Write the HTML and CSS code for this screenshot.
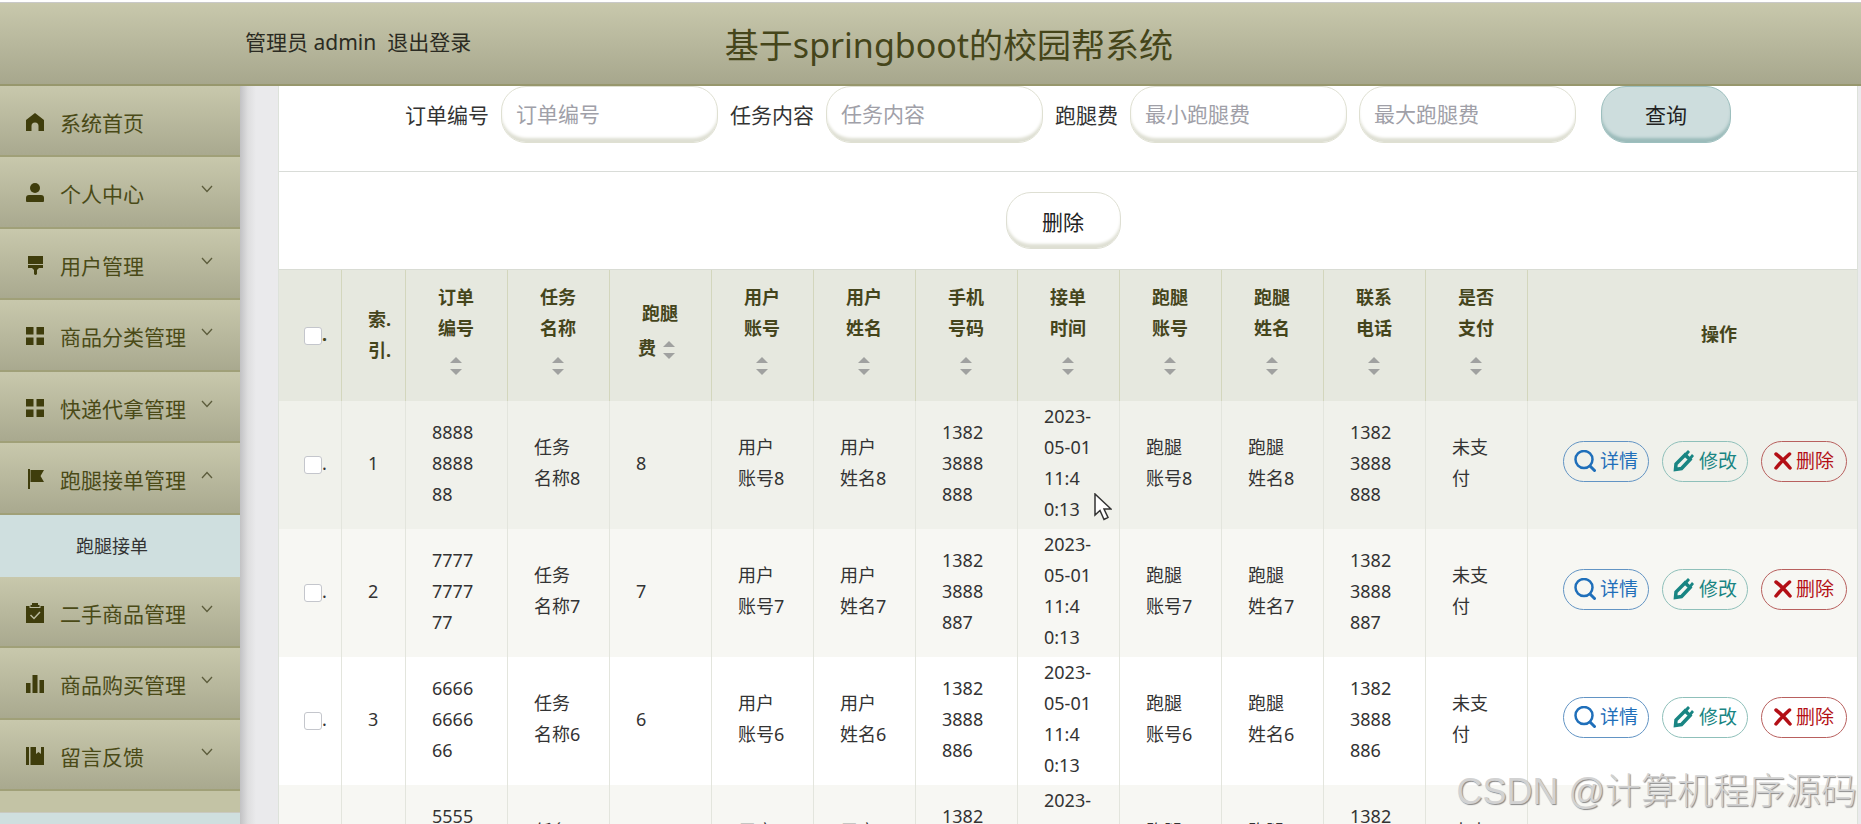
FILE: index.html
```html
<!DOCTYPE html>
<html lang="zh-CN">
<head>
    <meta charset="UTF-8">
    <meta name="viewport" content="width=device-width, initial-scale=1.0">
    <title>基于springboot的校园帮系统</title>
    <link rel="stylesheet" href="styles.css">
</head>
<body>
    <!-- shared icons -->
    <svg class="sprite" aria-hidden="true">
        <symbol id="i-home" viewBox="0 0 18 18"><path d="M9 0L0 7v11h5.500v-5a3.500 3.500 0 0 1 7 0v5H18V7z"/></symbol>
        <symbol id="i-user" viewBox="0 0 18 20"><circle cx="9" cy="5" r="5"/><path d="M3 12h12q3 0 3 3v3q0 1-1 1H1q-1 0-1-1v-3q0-3 3-3z"/></symbol>
        <symbol id="i-brush" viewBox="0 0 18 20"><path d="M2 1h15v8H2zM2 10h15v3h-4l-2 2v4q-1.500 2-3 0v-4l-2-2H2z"/></symbol>
        <symbol id="i-menu" viewBox="0 0 18 18"><path d="M0 0h7.500v7.500H0zM10.500 0H18v7.500h-7.500zM0 10.500h7.500V18H0zM10.500 10.500H18V18h-7.500z"/></symbol>
        <symbol id="i-flag" viewBox="0 0 18 20"><path d="M2 0h2v20H2zM4.500 1H18l-3.500 6L18 13H4.500z"/></symbol>
        <symbol id="i-claim" viewBox="0 0 18 20"><path d="M0 3h3.500v2h11V3H18v17H0z"/><path d="M6 2V0h6v2h1.500v2h-9V2z"/><path d="M4.500 12l3.500 3.500 6-6.500" fill="none" stroke="#b9b99c" stroke-width="1.500"/></symbol>
        <symbol id="i-data" viewBox="0 0 18 18"><path d="M0 8h4.500v10H0zM6.500 0h5v18h-5zM13.500 5H18v13h-4.500z"/></symbol>
        <symbol id="i-book" viewBox="0 0 18 18"><path d="M0 0h3v18H0zM4.500 0H10v7l2.500-2L15 7V0h3v18H4.500z"/></symbol>
        <symbol id="i-down" viewBox="0 0 12 8"><path d="M1 1l5 5.500L11 1" fill="none" stroke="currentColor" stroke-width="1.300"/></symbol>
        <symbol id="i-up" viewBox="0 0 12 8"><path d="M1 7l5-5.500L11 7" fill="none" stroke="currentColor" stroke-width="1.300"/></symbol>
        <symbol id="i-search" viewBox="0 0 22 22"><circle cx="10" cy="9.500" r="8.500" fill="none" stroke="currentColor" stroke-width="2.500"/><path d="M16 16l4.500 4.500" stroke="currentColor" stroke-width="3" stroke-linecap="round"/></symbol>
        <symbol id="i-edit" viewBox="0 0 22 22"><path d="M2.500 19.500l.5-5.500L12 5l5 4.500L8.500 18.500z" fill="none" stroke="currentColor" stroke-width="3.500"/><path d="M11 4l4-4 2 2-2.500 3 2 2L19 4l2 2-4 5z"/></symbol>
        <symbol id="i-close" viewBox="0 0 18 18"><path d="M2 2c4 3 9 8 14 14M15.500 2C11 6 6 11 2 16" fill="none" stroke="currentColor" stroke-width="3.500" stroke-linecap="round"/></symbol>
    </svg>

    <header class="header">
        <div class="user"><span>管理员 admin</span><a href="#">退出登录</a></div>
        <h1>基于springboot的校园帮系统</h1>
    </header>

    <div class="layout">
        <nav class="sidebar">
            <ul class="menu">
                <li><a href="#"><svg class="icon"><use href="#i-home"/></svg>系统首页</a></li>
                <li><a href="#"><svg class="icon"><use href="#i-user"/></svg>个人中心<svg class="arrow"><use href="#i-down"/></svg></a></li>
                <li><a href="#"><svg class="icon"><use href="#i-brush"/></svg>用户管理<svg class="arrow"><use href="#i-down"/></svg></a></li>
                <li><a href="#"><svg class="icon"><use href="#i-menu"/></svg>商品分类管理<svg class="arrow"><use href="#i-down"/></svg></a></li>
                <li><a href="#"><svg class="icon"><use href="#i-menu"/></svg>快递代拿管理<svg class="arrow"><use href="#i-down"/></svg></a></li>
                <li>
                    <a href="#"><svg class="icon"><use href="#i-flag"/></svg>跑腿接单管理<svg class="arrow"><use href="#i-up"/></svg></a>
                    <a class="sub" href="#">跑腿接单</a>
                </li>
                <li><a href="#"><svg class="icon"><use href="#i-claim"/></svg>二手商品管理<svg class="arrow"><use href="#i-down"/></svg></a></li>
                <li><a href="#"><svg class="icon"><use href="#i-data"/></svg>商品购买管理<svg class="arrow"><use href="#i-down"/></svg></a></li>
                <li><a href="#"><svg class="icon"><use href="#i-book"/></svg>留言反馈<svg class="arrow"><use href="#i-down"/></svg></a></li>
            </ul>
            <div class="menu-end"></div>
        </nav>

        <main class="main">
            <div class="panel">
                <form class="search">
                    <label for="orderNo">订单编号</label>
                    <input type="text" id="orderNo" placeholder="订单编号">
                    <label for="task">任务内容</label>
                    <input type="text" id="task" placeholder="任务内容">
                    <label for="feeMin">跑腿费</label>
                    <input type="text" id="feeMin" placeholder="最小跑腿费">
                    <input type="text" id="feeMax" placeholder="最大跑腿费" aria-label="最大跑腿费">
                    <button type="button" class="btn btn-query">查询</button>
                </form>

                <div class="toolbar">
                    <button type="button" class="btn">删除</button>
                </div>

                <table class="orders">
                    <colgroup>
                        <col class="c-check"><col class="c-index">
                        <col span="11" class="c-data">
                        <col>
                    </colgroup>
                    <thead>
                        <tr>
                            <th class="check"><input type="checkbox" aria-label="全选">.</th>
                            <th class="index">索.<br>引.</th>
                            <th>订单<br>编号<br><span class="sort"></span></th>
                            <th>任务<br>名称<br><span class="sort"></span></th>
                            <th>跑腿<br>费<span class="sort"></span></th>
                            <th>用户<br>账号<br><span class="sort"></span></th>
                            <th>用户<br>姓名<br><span class="sort"></span></th>
                            <th>手机<br>号码<br><span class="sort"></span></th>
                            <th>接单<br>时间<br><span class="sort"></span></th>
                            <th>跑腿<br>账号<br><span class="sort"></span></th>
                            <th>跑腿<br>姓名<br><span class="sort"></span></th>
                            <th>联系<br>电话<br><span class="sort"></span></th>
                            <th>是否<br>支付<br><span class="sort"></span></th>
                            <th class="ops">操作</th>
                        </tr>
                    </thead>
                    <tbody>
                        <tr class="hover">
                            <td class="check"><input type="checkbox" aria-label="选择第1行">.</td>
                            <td>1</td>
                            <td>8888<br>8888<br>88</td>
                            <td>任务<br>名称8</td>
                            <td>8</td>
                            <td>用户<br>账号8</td>
                            <td>用户<br>姓名8</td>
                            <td>1382<br>3888<br>888</td>
                            <td>2023-<br>05-01<br>11:4<br>0:13</td>
                            <td>跑腿<br>账号8</td>
                            <td>跑腿<br>姓名8</td>
                            <td>1382<br>3888<br>888</td>
                            <td>未支<br>付</td>
                            <td class="ops">
                                <div class="actions">
                                    <button type="button" class="act view"><svg><use href="#i-search"/></svg>详情</button>
                                    <button type="button" class="act edit"><svg><use href="#i-edit"/></svg>修改</button>
                                    <button type="button" class="act del"><svg><use href="#i-close"/></svg>删除</button>
                                </div>
                            </td>
                        </tr>
                        <tr>
                            <td class="check"><input type="checkbox" aria-label="选择第2行">.</td>
                            <td>2</td>
                            <td>7777<br>7777<br>77</td>
                            <td>任务<br>名称7</td>
                            <td>7</td>
                            <td>用户<br>账号7</td>
                            <td>用户<br>姓名7</td>
                            <td>1382<br>3888<br>887</td>
                            <td>2023-<br>05-01<br>11:4<br>0:13</td>
                            <td>跑腿<br>账号7</td>
                            <td>跑腿<br>姓名7</td>
                            <td>1382<br>3888<br>887</td>
                            <td>未支<br>付</td>
                            <td class="ops">
                                <div class="actions">
                                    <button type="button" class="act view"><svg><use href="#i-search"/></svg>详情</button>
                                    <button type="button" class="act edit"><svg><use href="#i-edit"/></svg>修改</button>
                                    <button type="button" class="act del"><svg><use href="#i-close"/></svg>删除</button>
                                </div>
                            </td>
                        </tr>
                        <tr>
                            <td class="check"><input type="checkbox" aria-label="选择第3行">.</td>
                            <td>3</td>
                            <td>6666<br>6666<br>66</td>
                            <td>任务<br>名称6</td>
                            <td>6</td>
                            <td>用户<br>账号6</td>
                            <td>用户<br>姓名6</td>
                            <td>1382<br>3888<br>886</td>
                            <td>2023-<br>05-01<br>11:4<br>0:13</td>
                            <td>跑腿<br>账号6</td>
                            <td>跑腿<br>姓名6</td>
                            <td>1382<br>3888<br>886</td>
                            <td>未支<br>付</td>
                            <td class="ops">
                                <div class="actions">
                                    <button type="button" class="act view"><svg><use href="#i-search"/></svg>详情</button>
                                    <button type="button" class="act edit"><svg><use href="#i-edit"/></svg>修改</button>
                                    <button type="button" class="act del"><svg><use href="#i-close"/></svg>删除</button>
                                </div>
                            </td>
                        </tr>
                        <tr>
                            <td class="check"><input type="checkbox" aria-label="选择第4行">.</td>
                            <td>4</td>
                            <td>5555<br>5555<br>55</td>
                            <td>任务<br>名称5</td>
                            <td>5</td>
                            <td>用户<br>账号5</td>
                            <td>用户<br>姓名5</td>
                            <td>1382<br>3888<br>885</td>
                            <td>2023-<br>05-01<br>11:4<br>0:13</td>
                            <td>跑腿<br>账号5</td>
                            <td>跑腿<br>姓名5</td>
                            <td>1382<br>3888<br>885</td>
                            <td>未支<br>付</td>
                            <td class="ops">
                                <div class="actions">
                                    <button type="button" class="act view"><svg><use href="#i-search"/></svg>详情</button>
                                    <button type="button" class="act edit"><svg><use href="#i-edit"/></svg>修改</button>
                                    <button type="button" class="act del"><svg><use href="#i-close"/></svg>删除</button>
                                </div>
                            </td>
                        </tr>
                    </tbody>
                </table>
            </div>
        </main>
    </div>

    <svg class="cursor" viewBox="0 0 18 28"><path d="M1 1v21l5-4.500 4 9 4-2-4-8.500h7z" fill="#fff" stroke="#333" stroke-width="1.500"/></svg>
    <div class="watermark">CSDN @计算机程序源码</div>
</body>
</html>
```

FILE: styles.css
```css
* {
    box-sizing: border-box;
}
body {
    margin: 0;
    height: 100vh;
    overflow: hidden;
    display: flex;
    flex-direction: column;
    font-family: "Noto Sans", "Noto Sans CJK SC", sans-serif;
    font-size: 21px;
    color: #333;
    background: #fff;
}
a {
    color: inherit;
    text-decoration: none;
}
button,
input {
    font-family: inherit;
    font-size: inherit;
}
.sprite {
    display: none;
}

/* header */
.header {
    flex: none;
    display: grid;
    grid-template-columns: 1fr auto 1fr;
    height: 84px;
    margin-top: 2px;
    padding-left: 37px;
    border-top: 1px solid #c9c9c9;
    border-bottom: 2px solid #97976d;
    background: linear-gradient(#c8c8ac, #a7a78d);
}
.user {
    display: flex;
    gap: 11px;
    padding: 22px 0 0 208px;
    line-height: 34px;
    color: #2b2b22;
}
.header h1 {
    margin: 0;
    padding-top: 2px;
    font-size: 34px;
    font-weight: normal;
    line-height: 80px;
    color: #45451a;
}

.layout {
    flex: 1;
    min-height: 0;
    display: flex;
}

/* sidebar */
.sidebar {
    flex: none;
    width: 240px;
    overflow: hidden;
    background: #cfdfdf;
}
.menu {
    list-style: none;
    margin: 0;
    padding: 0;
}
.menu a {
    display: flex;
    align-items: center;
    height: 71px;
    padding: 2px 27px 0 26px;
    border-bottom: 2px solid #a0a078;
    background: linear-gradient(#c8c8ac, #a9a98f);
    color: #4a4a17;
}
.menu li:nth-child(even) > a {
    height: 72px;
}
.menu li > a.sub {
    height: 62px;
    padding: 0 16px 2px 0;
    justify-content: center;
    border: 0;
    background: #cfdfdf;
    font-size: 18px;
    color: #333;
}
.icon {
    width: 18px;
    height: 20px;
    margin-right: 16px;
    fill: #3f3d0c;
}
.arrow {
    width: 12px;
    height: 8px;
    margin: 0 0 8px auto;
    color: #5c5c3c;
}
.menu-end {
    height: 22px;
    background: #c3c3a5;
    border-bottom: 1px solid #c9c9c0;
}

/* content */
.main {
    flex: 1;
    min-width: 0;
    padding: 0 3px 0 38px;
    background: linear-gradient(90deg, #c2c2c4, #dededf 8px, #eaeaec 16px);
}
.panel {
    border: 1px solid #dde2da;
    border-top: 0;
    background: #fff;
}
.search {
    display: flex;
    justify-content: center;
    align-items: center;
    gap: 12px;
    height: 86px;
    padding-bottom: 29px;
    border-bottom: 1px solid #d9dcd8;
}
.search input {
    width: 217px;
    height: 57px;
    padding: 0 14px;
    border: 1px solid #dfe0d2;
    border-radius: 25px;
    background: #fff;
    box-shadow: inset 0 -5px 3px -1px #dedfd3;
    outline: none;
}
.search input::placeholder {
    color: #a0a0a8;
}
.btn {
    width: 115px;
    height: 57px;
    padding: 0;
    border: 1px solid #dedfd3;
    border-radius: 25px;
    background: #fff;
    box-shadow: inset 0 -5px 3px -1px #dedfd3;
    color: #222;
    cursor: pointer;
}
.btn-query {
    width: 130px;
    margin-left: 13px;
    border-color: #9dbfbe;
    background: #cddddd;
    box-shadow: inset 0 -5px 3px -1px #9bbbba;
}
.toolbar {
    display: flex;
    justify-content: center;
    padding: 20px 10px 20px 0;
}

/* table */
.orders {
    width: 100%;
    table-layout: fixed;
    border-collapse: separate;
    border-spacing: 0;
    border-top: 1px solid #d9dcd4;
    font-size: 18px;
    line-height: 31px;
}
.c-check {
    width: 63px;
}
.c-index {
    width: 64px;
}
.c-data {
    width: 102px;
}
.orders th {
    height: 131px;
    padding: 0 1px 2px 0;
    border-right: 1px solid #d3d6bd;
    background: #e6e8df;
    color: #45451c;
}
.orders td {
    height: 128px;
    padding: 0 0 4px 26px;
    border-right: 1px solid #e3e5dd;
}
.orders th.index {
    padding-left: 26px;
    text-align: left;
}
.orders th.ops {
    padding-left: 54px;
    border-right: 0;
}
.orders td.ops {
    padding: 0 10px 0 0;
    border-right: 0;
}
.orders .check {
    padding-left: 25px;
    text-align: left;
    white-space: nowrap;
}
.orders tbody tr:nth-child(even) {
    background: #f7f7f3;
}
.orders tbody tr.hover {
    background: #f0f1eb;
}
.orders input {
    appearance: none;
    width: 18px;
    height: 18px;
    margin: 0;
    border: 1px solid #c4c6cc;
    border-radius: 3px;
    background: #fff;
    vertical-align: middle;
}
.sort {
    display: inline-flex;
    flex-direction: column;
    align-items: center;
    justify-content: center;
    gap: 6px;
    width: 26px;
    height: 43px;
    vertical-align: middle;
}
.sort::before,
.sort::after {
    content: "";
    border: 6px solid transparent;
}
.sort::before {
    border-top: 0;
    border-bottom-color: #a0a1a0;
}
.sort::after {
    border-bottom: 0;
    border-top-color: #a0a1a0;
}
.actions {
    display: flex;
    justify-content: flex-end;
    gap: 13px;
    padding-bottom: 8px;
}
.act {
    display: flex;
    align-items: center;
    justify-content: center;
    gap: 4px;
    width: 86px;
    height: 41px;
    padding: 0 0 3px;
    border: 1px solid;
    border-radius: 21px;
    background: transparent;
    font-size: 19px;
    cursor: pointer;
}
.act svg {
    width: 22px;
    height: 22px;
    margin-top: 2px;
    fill: currentColor;
}
.view {
    border-color: #6294c4;
    color: #1f6fba;
}
.edit {
    border-color: #8fc0ba;
    color: #198583;
}
.del {
    border-color: #b8605e;
    color: #b30f16;
}
.del svg {
    width: 18px;
    height: 18px;
}

/* overlays */
.cursor {
    position: absolute;
    left: 1094px;
    top: 493px;
    width: 18px;
    height: 28px;
}
.watermark {
    position: absolute;
    right: 4px;
    bottom: 6px;
    font-family: "Liberation Sans", "Noto Sans CJK SC", sans-serif;
    font-size: 36px;
    font-weight: 300;
    line-height: 52px;
    color: #d2d2d2;
    text-shadow: 1px 1px 1px #888;
}
```
